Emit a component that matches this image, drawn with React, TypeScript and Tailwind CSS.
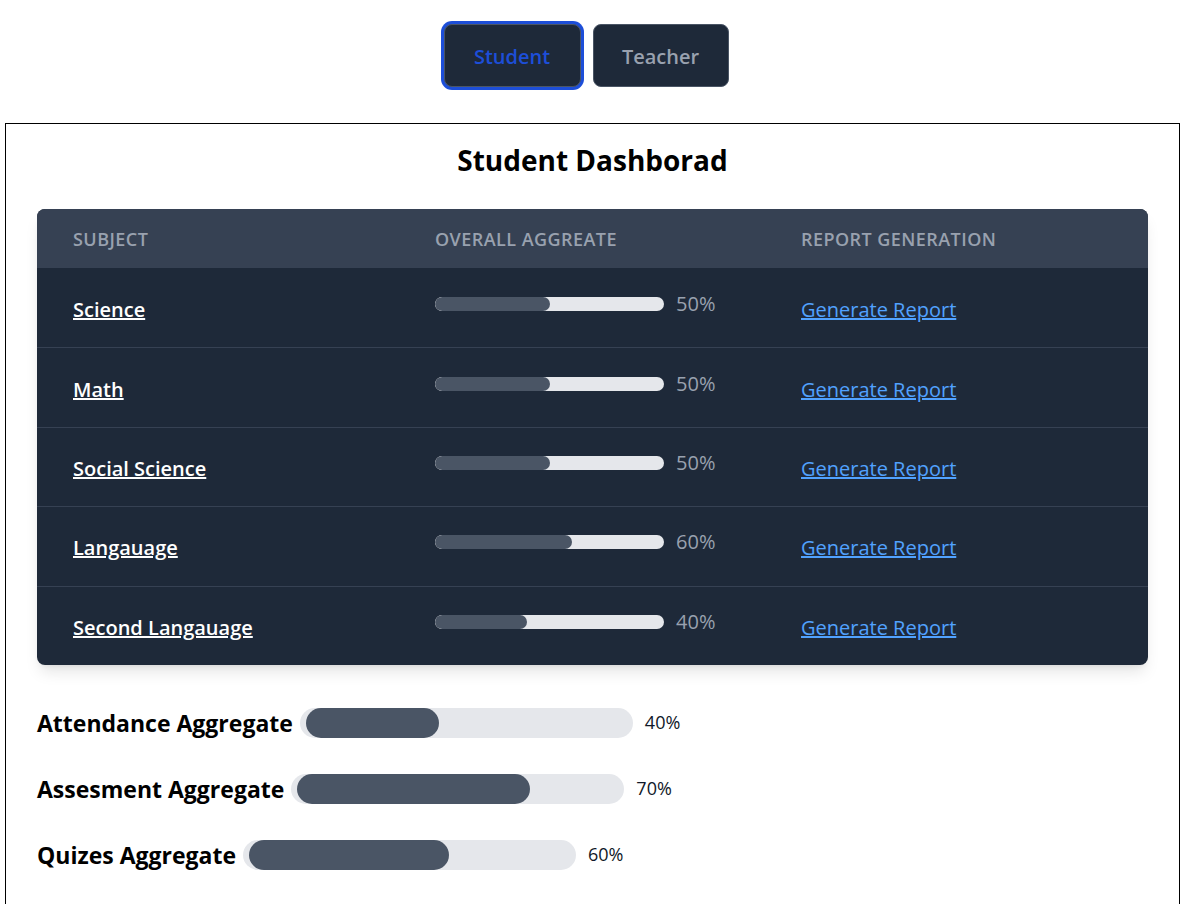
import { useState } from "react";

const subjects = [
  { name: "Science", value: 50 },
  { name: "Math", value: 50 },
  { name: "Social Science", value: 50 },
  { name: "Langauage", value: 60 },
  { name: "Second Langauage", value: 40 },
];

const aggregates = [
  { label: "Attendance Aggregate", value: 40 },
  { label: "Assesment Aggregate", value: 70 },
  { label: "Quizes Aggregate", value: 60 },
];

const App = () => {
  const [role, setRole] = useState<"student" | "teacher">("student");

  return (
    <div className="min-h-screen bg-white font-['Segoe_UI','Open_Sans',sans-serif] text-black">
      {/* Role switch */}
      <div className="flex justify-center gap-3 pt-6 pb-9 pr-[18px]">
        <button
          onClick={() => setRole("student")}
          className={`h-[63px] w-[137px] rounded-lg border border-gray-600 bg-gray-800 pt-[3px] text-[20px] font-semibold ${
            role === "student" ? "text-[#1d4ed8] ring-[3px] ring-[#1d4ed8]" : "text-gray-400"
          }`}
        >
          Student
        </button>
        <button
          onClick={() => setRole("teacher")}
          className={`h-[63px] w-[136px] rounded-lg border border-gray-600 bg-gray-800 pt-[3px] text-[20px] font-semibold ${
            role === "teacher" ? "text-[#1d4ed8] ring-[3px] ring-[#1d4ed8]" : "text-gray-400"
          }`}
        >
          Teacher
        </button>
      </div>

      {/* Dashboard card */}
      <div className="ml-[5px] w-[1175px] border border-black px-[31px] pb-14">
        <h1 className="pt-5 pb-[33px] text-center text-[28px] font-bold leading-[32px]">Student Dashborad</h1>

        <div className="overflow-hidden rounded-lg bg-gray-800 shadow-lg">
          <div className="grid h-[59px] grid-cols-[362px_366px_1fr] items-center bg-gray-700 px-9 pt-0.5 text-[18px] font-semibold uppercase tracking-wide text-gray-400">
            <span>Subject</span>
            <span>Overall Aggreate</span>
            <span>Report Generation</span>
          </div>
          {subjects.map((s, i) => (
            <div
              key={s.name}
              className={`grid h-[79.4px] grid-cols-[362px_366px_1fr] items-center px-9 pt-1 ${
                i > 0 ? "border-t border-gray-700" : ""
              }`}
            >
              <a href="#" className="text-[20px] font-semibold text-white underline">
                {s.name}
              </a>
              <div className="mb-3 flex items-center gap-3">
                <div className="h-[14px] w-[229px] overflow-hidden rounded-full bg-gray-200">
                  <div className="h-full rounded-full bg-gray-600" style={{ width: `${s.value}%` }} />
                </div>
                <span className="text-[20px] text-gray-400">{s.value}%</span>
              </div>
              <a href="#" className="text-[20px] text-blue-400 underline">
                Generate Report
              </a>
            </div>
          ))}
        </div>

        {/* Aggregates */}
        <div className="mt-[43px] flex flex-col gap-9">
          {aggregates.map((a) => (
            <div key={a.label} className="flex items-center">
              <span className="text-[23px] font-bold leading-[30px]">{a.label}</span>
              <div className="ml-[7px] h-[30px] w-[333px] rounded-full bg-gray-200 pl-1.5">
                <div className="h-full rounded-full bg-gray-600" style={{ width: `${(a.value * 333) / 100}px` }} />
              </div>
              <span className="ml-3 text-[18px] text-gray-900">{a.value}%</span>
            </div>
          ))}
        </div>
      </div>
    </div>
  );
};

export default App;
